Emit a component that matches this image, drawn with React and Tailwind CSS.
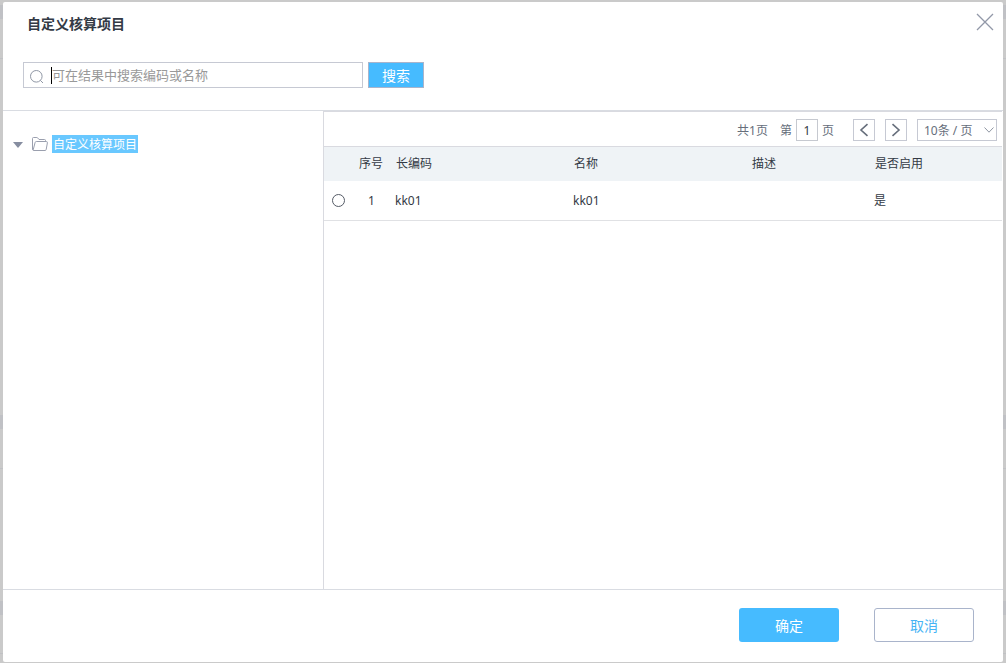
import { useState } from "react";

const columns = ["序号", "长编码", "名称", "描述", "是否启用"];
const rows = [{ id: 1, code: "kk01", name: "kk01", description: "", enabled: "是" }];

function SearchIcon() {
  return (
    <svg width="14" height="14" viewBox="0 0 14 14" fill="none" stroke="#9097a5" aria-hidden="true">
      <circle cx="6.3" cy="6.3" r="5.8" />
      <path d="M10.3 10.3 13 13" />
    </svg>
  );
}

function FolderIcon() {
  return (
    <svg width="16" height="14" viewBox="0 0 16 14" fill="none" stroke="#9a9fae" aria-hidden="true">
      <path d="M13.5 4.500V3.500Q13.500 2.500 12.500 2.500H7L5.700 .9Q5.400 .5 4.900 .5H1.500Q.5 .5 .5 1.500V12Q.5 13.500 2 13.500H13Q14 13.500 14.200 12.500L15.400 5.800Q15.500 4.500 14.300 4.500H4.300Q3.400 4.500 3.100 5.500L1.200 12.800" />
    </svg>
  );
}

function Chevron({ direction }) {
  return (
    <svg width="10" height="14" viewBox="0 0 10 14" fill="none" stroke="#666e7b" strokeWidth="1.6" aria-hidden="true">
      <path d={direction === "left" ? "M8.500 1.200 2 7l6.500 5.800" : "M1.500 1.200 8 7l-6.500 5.800"} />
    </svg>
  );
}

function Backdrop() {
  return (
    <div aria-hidden="true" className="absolute inset-0 -z-10 flex flex-col bg-[#cacaca]">
      <div className="mt-[5px] h-[14px] bg-[#c0c1c5]" />
      <div className="mt-[39px] h-px bg-[#c0c1c4]" />
      <div className="mt-[356px] h-[14px] bg-[#c0c1c5]" />
      <div className="mt-[39px] h-px bg-[#c0c1c4]" />
      <div className="mt-[132px] h-[14px] bg-[#c0c1c5]" />
      <div className="mt-[38px] h-px bg-[#c0c1c4]" />
    </div>
  );
}

export default function App() {
  const [query, setQuery] = useState("");
  const [page, setPage] = useState("1");
  const [selected, setSelected] = useState(null);

  return (
    <div className="relative isolate flex min-h-screen px-[3px] pt-[2px] pb-px font-['Noto_Sans','Noto_Sans_CJK_SC',sans-serif] text-xs text-[#333a45]">
      <Backdrop />
      <main role="dialog" aria-labelledby="dialog-title" className="flex min-w-0 flex-1 flex-col rounded-[2px] bg-white">
        <header className="flex h-[60px] items-start justify-between pr-[9px] pl-6">
          <h1 id="dialog-title" className="pt-3 text-sm leading-5 font-bold">自定义核算项目</h1>
          <button type="button" aria-label="关闭" className="mt-[11px]">
            <svg width="18" height="18" viewBox="0 0 18 18" stroke="#9298a8" strokeWidth="1.3" aria-hidden="true">
              <path d="M1 1 17 17M17 1 1 17" />
            </svg>
          </button>
        </header>

        <form className="flex h-12 shrink-0 items-start gap-[5px] pl-5" onSubmit={(e) => e.preventDefault()}>
          <label className="flex h-[26px] w-[340px] items-center border border-[#c6c9d3] pl-[6px]">
            <span className="pt-1"><SearchIcon /></span>
            <span aria-hidden="true" className="ml-[7px] h-[17px] w-px bg-black" />
            <input
              type="text"
              aria-label="搜索"
              value={query}
              onChange={(e) => setQuery(e.target.value)}
              placeholder="可在结果中搜索编码或名称"
              className="h-6 min-w-0 flex-1 text-[13px] outline-none placeholder:text-[#999999]"
            />
          </label>
          <button type="submit" className="h-[26px] w-14 border border-[#a9b4cb] bg-[#46bbff] pt-[2px] text-sm leading-[22px] text-white">搜索</button>
        </form>

        <div className="flex min-h-0 flex-1 border-y border-[#d9dce2]">
          <nav className="w-[320px] shrink-0 pt-6 pl-[10px]">
            <button type="button" aria-expanded="true" className="flex h-[18px] items-center">
              <svg width="10" height="6" viewBox="0 0 10 6" fill="#868da0" className="mt-[2px]" aria-hidden="true"><path d="M0 0h10L5 6z" /></svg>
              <span className="ml-[9px]"><FolderIcon /></span>
              <span className="ml-1 h-[18px] bg-[#69c8ff] px-px pt-[2px] leading-4 text-white">自定义核算项目</span>
            </button>
          </nav>

          <section className="mr-px min-w-0 flex-1 border-t border-l border-[#d9dae0]">
            <div className="flex h-[35px] items-center justify-end border-b border-[#d9dae0] pt-[2px] pr-[5px] text-[#666e7b]">
              <span className="pt-px">共1页</span>
              <label className="ml-3 flex items-center gap-1">
                <span className="pt-px">第</span>
                <input
                  type="text"
                  value={page}
                  onChange={(e) => setPage(e.target.value)}
                  className="h-[22px] w-[22px] border border-[#c6c9d0] text-center text-[#333a45] outline-none"
                />
                <span className="pt-px">页</span>
              </label>
              <button type="button" aria-label="上一页" className="ml-[19px] flex h-[22px] w-[22px] items-center justify-center border border-[#c6c9d3]"><Chevron direction="left" /></button>
              <button type="button" aria-label="下一页" className="ml-[10px] flex h-[22px] w-[22px] items-center justify-center border border-[#c6c9d3]"><Chevron direction="right" /></button>
              <span className="ml-[10px] grid h-[22px] w-20 items-center border border-[#c6c9d3]">
                <select aria-label="每页条数" className="col-start-1 row-start-1 h-5 appearance-none pt-px pl-[6px] outline-none" defaultValue="10">
                  <option value="10">10条 / 页</option>
                  <option value="20">20条 / 页</option>
                </select>
                <svg width="10" height="6" viewBox="0 0 10 6" fill="none" stroke="#8f96a3" className="pointer-events-none col-start-1 row-start-1 mr-[2px] justify-self-end" aria-hidden="true"><path d="M.5.5 5 5.200 9.500.5" /></svg>
              </span>
            </div>

            <table className="w-full table-fixed border-separate border-spacing-0 text-left">
              <colgroup>
                <col className="w-[29px]" />
                <col className="w-[37px]" />
                <col className="w-[178px]" />
                <col className="w-[178px]" />
                <col className="w-[123px]" />
                <col />
              </colgroup>
              <thead>
                <tr className="h-[34px] bg-[#eff3f6]">
                  <th scope="col" aria-label="选择" />
                  {columns.map((c) => (
                    <th key={c} scope="col" className="pl-[6px] font-normal">{c}</th>
                  ))}
                </tr>
              </thead>
              <tbody>
                {rows.map((r) => (
                  <tr key={r.id} className="h-10 *:border-b *:border-[#e0e1e4]">
                    <td>
                      <input
                        type="radio"
                        name="item"
                        aria-label={r.name}
                        checked={selected === r.id}
                        onChange={() => setSelected(r.id)}
                        className="mx-auto block h-[13px] w-[13px] appearance-none rounded-full border border-[#555b66] checked:border-4"
                      />
                    </td>
                    <td className="text-center">{r.id}</td>
                    <td className="pl-[5px]">{r.code}</td>
                    <td className="pl-[5px]">{r.name}</td>
                    <td className="pl-[5px]">{r.description}</td>
                    <td className="pl-[5px]">{r.enabled}</td>
                  </tr>
                ))}
              </tbody>
            </table>
          </section>
        </div>

        <footer className="flex h-[72px] shrink-0 items-start justify-end gap-[35px] pt-[18px] pr-[29px] text-sm">
          <button type="button" className="h-[34px] w-[100px] rounded-[3px] bg-[#46bbff] pt-[2px] text-white">确定</button>
          <button type="button" className="h-[34px] w-[100px] rounded-[3px] border border-[#a9b4cb] pt-[2px] text-[#46b4f5]">取消</button>
        </footer>
      </main>
    </div>
  );
}
